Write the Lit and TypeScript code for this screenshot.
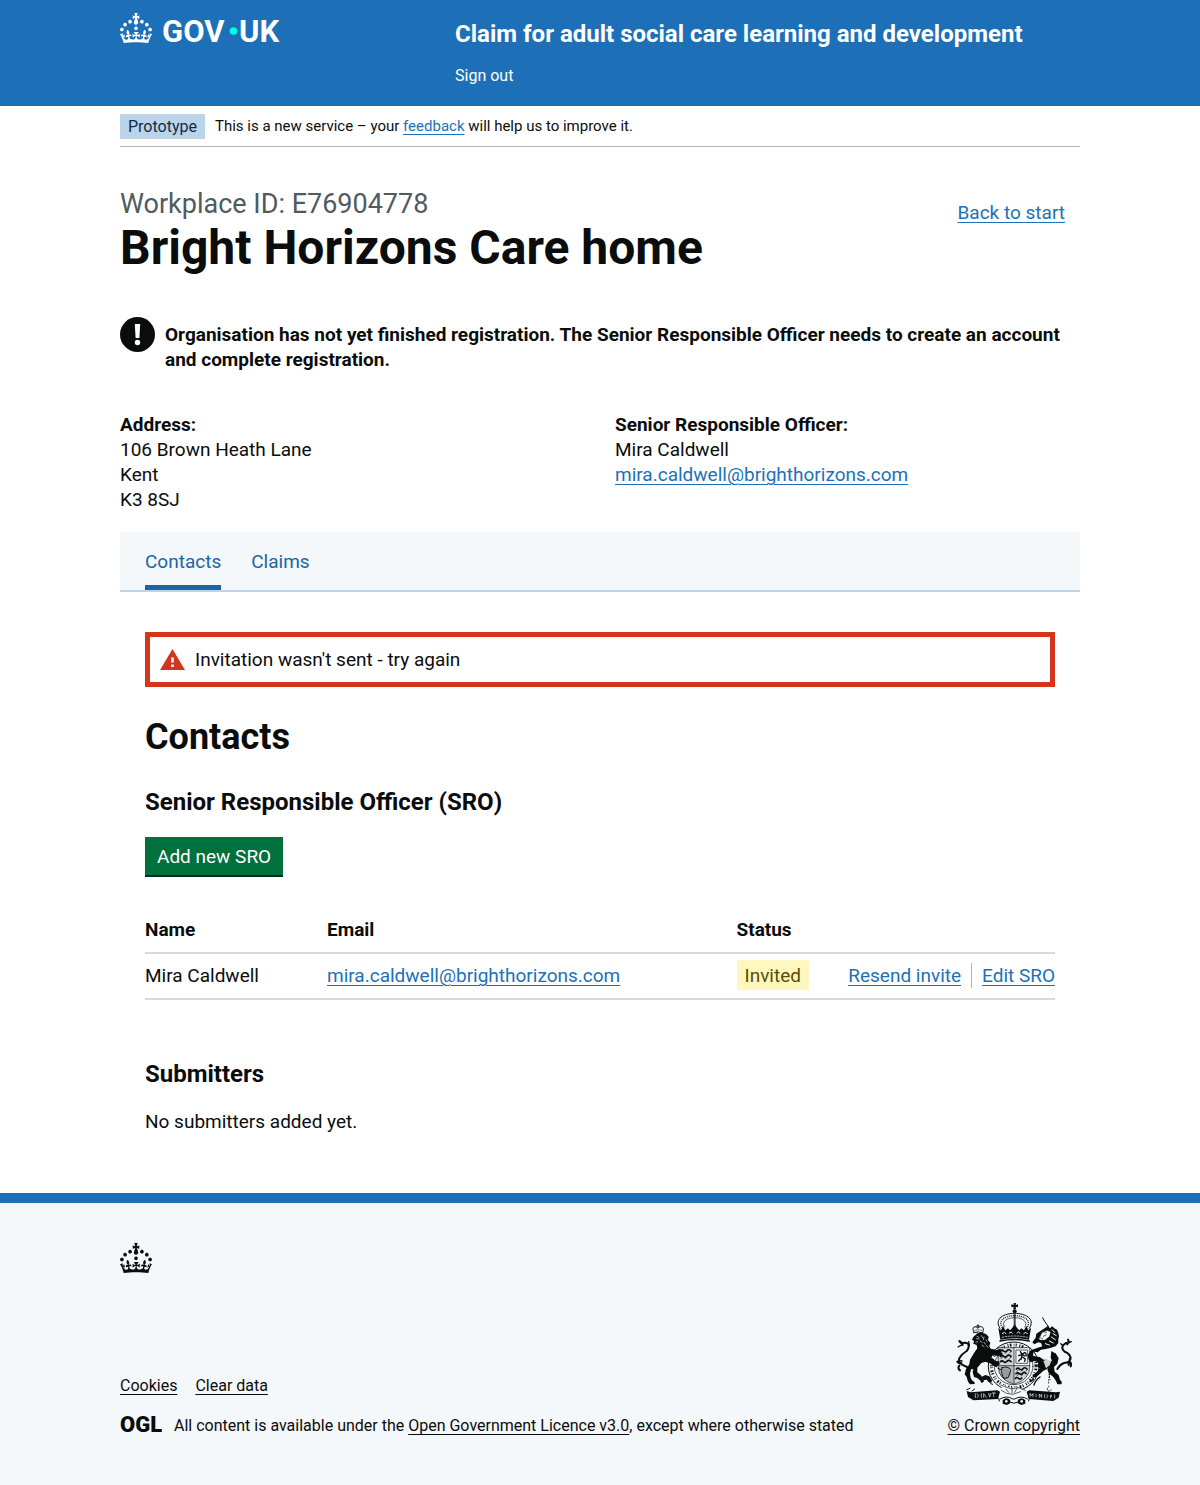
import { LitElement, html, css, svg } from "lit";
import { customElement, property } from "lit/decorators.js";

const CROWN =
  "M22.6 10.4c-1 .4-2-.1-2.4-1-.4-.9.1-2 1-2.4.9-.4 2 .1 2.4 1s-.1 2-1 2.4m-5.9 6.7c-.9.4-2-.1-2.4-1-.4-.9.1-2 1-2.4.9-.4 2 .1 2.4 1s-.1 2-1 2.4m10.8-3.7c-1 .4-2-.1-2.4-1-.4-.9.1-2 1-2.4.9-.4 2 .1 2.4 1s0 2-1 2.4m3.3 4.8c-1 .4-2-.1-2.4-1-.4-.9.1-2 1-2.4.9-.4 2 .1 2.4 1s-.1 2-1 2.4M17 4.7l2.3 1.2V2.5l-2.3.7-.2-.2.9-3h-3.4l.9 3-.2.2c-.1.1-2.3-.7-2.3-.7v3.4L15 4.7c.1.1.1.2.2.2l-1.3 4c-.1.2-.1.4-.1.6 0 1.1.8 2 1.9 2.2h.7c1-.2 1.9-1.1 1.9-2.1 0-.2 0-.4-.1-.6l-1.3-4c-.1-.2 0-.2.1-.3m-7.6 5.7c.9.4 2-.1 2.4-1 .4-.9-.1-2-1-2.4-.9-.4-2 .1-2.4 1s0 2 1 2.4m-5 3c.9.4 2-.1 2.4-1 .4-.9-.1-2-1-2.4-.9-.4-2 .1-2.4 1s.1 2 1 2.4m-3.2 4.8c.9.4 2-.1 2.4-1 .4-.9-.1-2-1-2.4-.9-.4-2 .1-2.4 1s0 2 1 2.4m14.8 11c4.4 0 8.6.3 12.3.8 1.1-4.5 2.4-7 3.7-8.8l-2.5-.9c.2 1.3.3 1.9 0 2.7-.4-.4-.8-1.1-1.1-2.3l-1.2 4c.7-.5 1.3-.8 2-.9-1.1 2.5-2.6 3.1-3.5 3-1.1-.2-1.7-1.2-1.5-2.1.3-1.2 1.5-1.5 2.1-.1 1.1-2.3-.8-3-2-2.3 1.9-1.9 2.1-3.5.6-5.6-2.1 1.6-2.1 3.2-1.2 5.5-1.2-1.4-3.2-.6-2.5 1.6.9-1.4 2.1-.5 1.9.8-.2 1.1-1.7 2.1-3.5 1.9-2.7-.2-2.9-2.1-2.9-3.6.7-.1 1.9.5 2.9 1.9l.4-4.3c-1.1 1.1-2.1 1.4-3.2 1.4.4-1.2 2.1-3 2.1-3h-5.4s1.7 1.9 2.1 3c-1.1 0-2.1-.2-3.2-1.4l.4 4.3c1-1.4 2.2-2 2.9-1.9-.1 1.5-.2 3.4-2.9 3.6-1.9.2-3.4-.8-3.5-1.9-.2-1.3 1-2.2 1.9-.8.7-2.3-1.2-3-2.5-1.6.9-2.2.9-3.9-1.2-5.5-1.5 2-1.3 3.7.6 5.6-1.2-.7-3.1 0-2 2.3.6-1.4 1.8-1.1 2.1.1.2.9-.3 1.9-1.5 2.1-.9.2-2.4-.5-3.5-3 .6 0 1.2.3 2 .9l-1.2-4c-.3 1.1-.7 1.9-1.1 2.3-.3-.8-.2-1.4 0-2.7l-2.9.9C1.3 23 2.6 25.5 3.7 30c3.7-.5 7.9-.8 12.3-.8";

@customElement("gov-crown")
export class GovCrown extends LitElement {
  static styles = css`
    :host { display: block; width: 32px; height: 30px; }
    svg { display: block; fill: currentColor; }
  `;
  render() {
    return html`<svg viewBox="0 0 32 30" width="32" height="30" aria-hidden="true">
      <path fill-rule="evenodd" d=${CROWN}></path>
    </svg>`;
  }
}

@customElement("royal-arms")
export class RoyalArms extends LitElement {
  static styles = css`
    :host { display: block; width: 116px; height: 102px; }
    svg { display: block; }
    .ink { fill: #0b0c0c; }
    .line { fill: none; stroke: #0b0c0c; stroke-linecap: round; stroke-linejoin: round; }
    .band { fill: none; stroke: #0b0c0c; }
    .paper { fill: #f4f8fb; }
    .grey { fill: #b4b8bb; }
    .cut { fill: none; stroke: #f4f8fb; stroke-linecap: round; }
  `;

  private crown() {
    return svg`
      <path class="ink" d="M209 24h7l-1 6 7-2v9l-7-2 1 8h-8l1-8-7 2v-9l7 2z"/>
      <circle class="ink" cx="212" cy="49" r="6"/>
      <path class="paper" d="M169 100C150 70 180 56 212 56s62 14 43 44z"/>
      <path class="line" stroke-width="3" d="M168 100C148 70 182 55 212 55s64 15 44 45"/>
      <path class="band" stroke-width="4" stroke-dasharray="3 3" d="M175 98C160 74 186 62 212 62s52 12 37 36"/>
      <path class="line" stroke-width="2" d="M181 96c-10-16 8-28 31-28s41 12 31 28"/>
      <path class="band" stroke-width="6" stroke-dasharray="4 2" d="M212 58v36"/>
      <path class="ink" d="M163 98l8 8 6-13 7 13 8-6 6 6 6-6 8-12 8 12 6 6 6-6 8 6 7-13 6 13 8-8-6 36q-43-9-86 0z"/>
      <path class="cut" stroke-width="3" d="M175 115q7-7 11 1M196 114q6-7 9 0M219 114q4-7 9 0M239 116q4-8 11-1"/>
      <path class="cut" stroke-width="2" stroke-dasharray="5 4" d="M174 127q38-8 76 0"/>
      <path class="line" stroke-width="4" d="M168 138q44-9 88 0"/>`;
  }

  private garter() {
    return svg`
      <ellipse class="paper" cx="209" cy="214" rx="76" ry="73"/>
      <ellipse class="line" stroke-width="3" cx="209" cy="214" rx="76" ry="73"/>
      <ellipse class="band" stroke-width="9" stroke-dasharray="3 4 5 7 2 4 3 8" cx="209" cy="214" rx="67" ry="64"/>
      <ellipse class="line" stroke-width="2" cx="209" cy="214" rx="58" ry="55"/>`;
  }

  private shield() {
    return svg`
      <path class="paper" d="M163 158h94v58q0 38-47 52-47-14-47-52z"/>
      <path class="grey" d="M163 158h47v54h-47zM210 212h47v4q0 38-47 52z" opacity=".55"/>
      <path class="grey" d="M163 212h47v56q-47-14-47-52z"/>
      <path class="line" stroke-width="2" d="M163 158h94v58q0 38-47 52-47-14-47-52zM210 158v110M163 212h94"/>
      <path class="line" stroke-width="5" d="M169 168q5-5 10 0t10-1 12 1M169 184q5-5 10 0t10-1 12 1M169 200q5-5 10 0t10-1 12 1"/>
      <path class="line" stroke-width="2" d="M171 175l4-5M184 175l4-5M197 174l4-4M171 191l4-5M184 191l4-5M197 190l4-4"/>
      <rect class="line" stroke-width="2" x="217" y="165" width="34" height="40"/>
      <path class="line" stroke-width="4" d="M229 170l5 8 8-5M224 182l10-4 9 5M231 190l-7 8M236 186l8 6-2 7M245 174l2 8M234 178l-2 14"/>
      <path class="line" stroke-width="3" d="M174 218q18-6 26 6-2 14-8 24l-12 2q-10-12-6-32"/>
      <path class="line" stroke-width="1" d="M180 222v24M186 222v26M192 222v22"/>
      <path class="line" stroke-width="5" d="M217 222q5-5 10 0t10-1 12 1M216 236q5-5 10 0t10-1 10 1M214 250q5-5 9 0t10-1"/>
      <path class="line" stroke-width="2" d="M219 229l4-5M232 229l4-5M246 228l3-4M219 243l4-5M232 243l4-5"/>`;
  }

  private lion() {
    return svg`
      <path class="ink" d="M92 122l8-7 14-2 12 4 8 8-2 10 7 8-3 10 4 8 20 4 8-4 6 6-4 6 6 2-2 6-12 2-16-2-4 8 12 8 10 2 4 8-6 4-4 6-8-3-12-9-14-5-12 4-12 14 0 14 10 8 8 12 2 8-8 4-4-8-10-8-8-2-4-14 2-10-6-2-4 16 2 12 4 8 8 6 0 5-14 1-6-8-4-14-6-8 4-16 10-14 2-14 12-20 10-14-2-10-10-4 2-8-6-4 4-8z"/>
      <path class="ink" d="M112 246l12-6 12 4 8 12-2 8-8-2-6-8-10 2z"/>
      <path class="line" stroke-width="3" d="M90 112q-8-14 3-17 6 1 9 5 4-7 11-5 9 4 3 17M89 113q13-5 28 1M102 89v9M98 93h8"/>
      <path class="line" stroke-width="2" stroke-dasharray="2 3" d="M92 107q10-5 22 0"/>
      <path class="cut" stroke-width="2" d="M99 124l6 3M97 131l8 1M112 122l4 6M120 126l-2 8M108 138l6 4M120 142l4 5M126 134l3 5M128 152l4 5M114 150l6 5M101 140l-5 2"/>
      <path class="line" stroke-width="6" d="M84 220q-14-2-24-8-18-8-14-22 8-14 22-22 10-12 4-22-10-6-18 0M52 204q-8 2-12-4M56 150q-4-10-10-12M46 212q-6 8 2 14"/>
      <path class="line" stroke-width="4" d="M46 140l8 8M42 156l14-8M74 140l2 12M44 196l10 2"/>
      <path class="line" stroke-width="3" d="M92 282l-8 6M78 280l-10 4M140 266l6 2M168 180l6 3M162 220l8 4"/>`;
  }

  private unicorn() {
    return svg`
      <path class="line" stroke-width="3" d="M296 68l4 8M301 77l5 8M307 86l6 9"/>
      <path class="ink" d="M313 92l4 8 8-6 6 6 8 4 4 10 2 10-2 8 0 12-8 10-14 4-16 4-14 2-10 8-10-2-6 6 4 8 18 2 12 8 12 0 14 4 0 10-16 14-12 6-6 6-14 12-10 2-2-6 14-12 8-10-8-6 4-10-10-6-14 4-6-10-2-12 10-14 16-6 18-6-4-10-8-2-12 6-6-6 10-14 2-12z"/>
      <path class="paper" d="M294 112l16-6 10 4-4 14-12 10-12 2-8-4z"/>
      <path class="line" stroke-width="2" d="M284 132l10-20 16-6 10 4M298 124l8-4M303 113l4 0M290 128l6 4"/>
      <path class="cut" stroke-width="3" d="M324 104l8 8M327 116l10 6M322 126l12 8M316 138l12 6M304 146l12 4"/>
      <path class="ink" d="M322 168l14 8 8 14-4 16-10 10 2 14 12 10 4 14 6 8-2 6-12 0-4-10-8-12-12-10-6-12 6-14 10-8-6-14z"/>
      <path class="paper" d="M298 198l14-6 10 4-4 14-12 10z" opacity=".85"/>
      <path class="band" stroke-width="3" stroke-dasharray="5 3" d="M334 176q-4 20-16 34-6 22 0 44M326 214q-12 24-12 52M316 274q-10 4-4 14 10 2 10-8"/>
      <path class="line" stroke-width="6" d="M340 222q8-14 20-18 20-2 20-16-4-14-18-18-12-10-4-20 8-8 18-8M370 148q6-10 2-14M378 190l-4 20M376 200q8 6 4 14"/>
      <path class="line" stroke-width="4" d="M358 152l-8-6M366 144l16-4M372 204l8-2M262 186l-4 10M268 254l-10 6M288 246q-14 10-18 24"/>`;
  }

  private motto() {
    return svg`
      <path class="ink" d="M68 288l12 4 80-6 8 4-6 22-74 4-16-10z"/>
      <path class="ink" d="M348 290l-12 2-80-6-8 4 6 22 74 6 16-10z"/>
      <path class="cut" stroke-width="2" d="M94 296v12M100 296q8 6 0 12M112 296v11M119 307v-11l8 11M134 295l3 11 4-11M149 294v11M145 294h9"/>
      <path class="cut" stroke-width="2" d="M258 304v-9l5 7 4-6v9M275 297q7 4 0 9M286 307v-10l7 10v-9M302 299v9M308 300q8 4 0 9M320 309v-9q8 3 1 5M332 300v9"/>
      <path class="paper" d="M172 268l30 10 18-2 22 8-6 18-36 4-26-14z"/>
      <path class="line" stroke-width="2" d="M170 270l32 12 20-4 22 8M172 286q14 12 34 12l24-8M186 282l8 10M204 276v18M220 278l-8 14"/>
      <path class="line" stroke-width="3" d="M168 312q20-12 38 0h6q20-12 38 0"/>
      <path class="ink" d="M176 316q10-12 22-2l2 10-12 6-12-4zM222 314q12-10 22 2l0 10-12 4-12-6z"/>
      <circle class="paper" cx="187" cy="319" r="4"/><circle class="paper" cx="233" cy="319" r="4"/>
      <path class="line" stroke-width="3" d="M200 322q10 6 20 0M166 318l-2-8M254 318l2-8"/>`;
  }

  render() {
    return html`<svg viewBox="36 24 348 306" width="116" height="102" aria-hidden="true">
      ${this.garter()}${this.shield()}${this.crown()}${this.lion()}${this.unicorn()}${this.motto()}
    </svg>`;
  }
}

interface Contact {
  name: string;
  email: string;
  status: string;
}

@customElement("app-root")
export class AppRoot extends LitElement {
  @property({ type: Array }) contacts: Contact[] = [
    { name: "Mira Caldwell", email: "mira.caldwell@brighthorizons.com", status: "Invited" },
  ];

  static styles = css`
    :host {
      display: block;
      background: #f4f8fb;
      color: #0b0c0c;
      font-family: Roboto, "Liberation Sans", sans-serif;
      font-size: 19px;
      line-height: 25px;
    }
    * { box-sizing: border-box; }
    h1, h2, h3, p, ul, address { margin: 0; padding: 0; font-style: normal; }
    a { color: #1d70b8; text-decoration-thickness: 1px; text-underline-offset: 3px; }
    .width { max-width: 960px; margin: 0 auto; }

    .header { background: #1d70b8; color: #fff; }
    .header .width { display: grid; grid-template-columns: 335px 1fr; padding: 13px 0 20px; }
    .logo { display: flex; gap: 10px; align-items: flex-start; color: #fff; text-decoration: none; }
    .header a { color: #fff; text-decoration: none; }
    .wordmark { fill: #fff; font-family: Roboto, sans-serif; font-weight: 700; font-size: 31px; }
    .dot { fill: #00ffe0; }
    .service { font-size: 24px; line-height: 30px; font-weight: 700; padding-top: 6px; }
    .signout { font-size: 16px; line-height: 20px; padding-top: 17px; }
    .signout a { display: block; }

    .page { background: #fff; padding-bottom: 59px; }
    .phase { display: flex; align-items: center; gap: 10px; padding: 8px 0 7px; border-bottom: 1px solid #b1b4b6; font-size: 15px; }
    .tag { background: #bbd4ea; color: #0c2d4a; padding: 0 8px; font-size: 16px; font-weight: 400; }

    .title { display: flex; justify-content: space-between; padding: 40px 15px 0 0; }
    .caption { display: block; font-size: 27px; line-height: 34px; color: #505a5f; font-weight: 400; }
    h1 { font-size: 48px; line-height: 54px; font-weight: 700; }
    .back { padding-top: 13px; }
    .warning { display: flex; gap: 10px; font-weight: 700; padding-top: 42px; }
    .warning svg { flex: none; }
    .warning p { padding-top: 5px; }
    .details { display: grid; grid-template-columns: 1fr 1fr; column-gap: 30px; padding: 40px 0 20px; }

    .tabs { display: flex; gap: 30px; padding: 0 25px; background: #f4f8fb; border-bottom: 2px solid #bbd4ea; }
    .tabs a { color: #1a65a6; padding: 17px 0 11px; text-decoration: none; border-bottom: 5px solid transparent; }
    .tabs a[aria-current] { border-bottom-color: #1a65a6; }

    .panel { padding: 40px 25px 0; }
    .alert { display: flex; align-items: center; gap: 10px; border: 5px solid #d4351c; padding: 10px; }
    h2 { font-size: 36px; line-height: 40px; padding: 30px 0; }
    h3 { font-size: 24px; line-height: 30px; }
    button {
      font: inherit; color: #fff; background: #00703c; border: 0; border-bottom: 2px solid #002d18;
      padding: 7px 12px 6px; margin: 20px 0 30px; cursor: pointer;
    }
    table { width: 100%; border-collapse: collapse; }
    th, td { text-align: left; padding: 10px 20px 10px 0; border-bottom: 2px solid #d8dada; line-height: 25px; }
    td { padding-top: 9px; }
    .name { width: 20%; }
    .email { width: 45%; }
    .actions { padding-right: 0; }
    .links { display: flex; justify-content: flex-end; white-space: nowrap; }
    .links a + a { border-left: 1px solid #b1b4b6; margin-left: 10px; padding-left: 10px; }
    .status { display: inline-block; background: #fff7bf; color: #594d00; padding: 3px 8px 2px; margin: -3px 0 -2px; }
    .submitters { padding-top: 59px; }
    .submitters p { padding-top: 20px; }

    .footer { border-top: 10px solid #1d70b8; padding: 40px 0 49px; font-size: 16px; line-height: 20px; }
    .footer a { color: #0b0c0c; }
    .meta { display: flex; justify-content: space-between; align-items: flex-end; padding-top: 30px; }
    .metalinks { display: flex; gap: 18px; list-style: none; padding-bottom: 20px; }
    .licence { display: flex; gap: 12px; }
    .ogl { flex: none; margin: -5px 0 -3px; fill: #0b0c0c; font-family: Roboto, sans-serif; font-weight: 900; font-size: 22px; }
    .crest { display: flex; flex-direction: column; align-items: center; gap: 11px; }
  `;

  render() {
    return html`
      <header class="header">
        <div class="width">
          <a class="logo" href="#" aria-label="GOV.UK">
            <gov-crown></gov-crown>
            <svg class="wordmark" width="126" height="42" viewBox="0 0 126 42" aria-hidden="true">
              <text x="0" y="29">GOV</text>
              <circle class="dot" cx="71.500" cy="18" r="3.800"></circle>
              <text x="77" y="29">UK</text>
            </svg>
          </a>
          <div>
            <div class="service"><a href="#">Claim for adult social care learning and development</a></div>
            <nav class="signout"><a href="#">Sign out</a></nav>
          </div>
        </div>
      </header>

      <div class="page">
        <div class="width">
          <div class="phase">
            <strong class="tag">Prototype</strong>
            <span>This is a new service – your <a href="#">feedback</a> will help us to improve it.</span>
          </div>
          <main>
            <div class="title">
              <div>
                <span class="caption">Workplace ID: E76904778</span>
                <h1>Bright Horizons Care home</h1>
              </div>
              <a class="back" href="#">Back to start</a>
            </div>
            <div class="warning">
              <svg width="35" height="35" viewBox="0 0 35 35" aria-hidden="true">
                <circle cx="17.500" cy="17.500" r="17.500" fill="#0b0c0c"></circle>
                <path d="M14.800 7h5.400l-.8 14h-3.800z" fill="#fff"></path>
                <circle cx="17.500" cy="25.500" r="2.700" fill="#fff"></circle>
              </svg>
              <p>Organisation has not yet finished registration. The Senior Responsible Officer needs to create an account and complete registration.</p>
            </div>
            <div class="details">
              <address><b>Address:</b><br />106 Brown Heath Lane<br />Kent<br />K3 8SJ</address>
              <div><b>Senior Responsible Officer:</b><br />Mira Caldwell<br /><a href="#">mira.caldwell@brighthorizons.com</a></div>
            </div>
            <nav class="tabs" aria-label="Organisation">
              <a href="#" aria-current="page">Contacts</a>
              <a href="#">Claims</a>
            </nav>
            <div class="panel">
              <div class="alert" role="alert">
                <svg width="25" height="21" viewBox="0 0 25 21" aria-hidden="true">
                  <path d="M12.500 0L25 21H0z" fill="#d4351c"></path>
                  <path d="M11.200 8.500h2.600v5h-2.600zM11.200 15.500h2.600v2.500h-2.600z" fill="#fff"></path>
                </svg>
                <span>Invitation wasn't sent - try again</span>
              </div>
              <h2>Contacts</h2>
              <h3>Senior Responsible Officer (SRO)</h3>
              <button type="button">Add new SRO</button>
              <table>
                <thead>
                  <tr>
                    <th class="name" scope="col">Name</th>
                    <th class="email" scope="col">Email</th>
                    <th scope="col">Status</th>
                    <th class="actions"></th>
                  </tr>
                </thead>
                <tbody>
                  ${this.contacts.map(
                    (c) => html`<tr>
                      <td>${c.name}</td>
                      <td><a href="#">${c.email}</a></td>
                      <td><span class="status">${c.status}</span></td>
                      <td class="actions"><div class="links"><a href="#">Resend invite</a><a href="#">Edit SRO</a></div></td>
                    </tr>`
                  )}
                </tbody>
              </table>
              <section class="submitters">
                <h3>Submitters</h3>
                <p>No submitters added yet.</p>
              </section>
            </div>
          </main>
        </div>
      </div>

      <footer class="footer">
        <div class="width">
          <gov-crown></gov-crown>
          <div class="meta">
            <div>
              <ul class="metalinks">
                <li><a href="#">Cookies</a></li>
                <li><a href="#">Clear data</a></li>
              </ul>
              <div class="licence">
                <svg class="ogl" width="42" height="28" viewBox="0 0 42 28" aria-hidden="true">
                  <text x="0" y="21">OGL</text>
                </svg>
                <span>All content is available under the <a href="#">Open Government Licence v3.0</a>, except where otherwise stated</span>
              </div>
            </div>
            <div class="crest">
              <royal-arms></royal-arms>
              <a href="#">© Crown copyright</a>
            </div>
          </div>
        </div>
      </footer>
    `;
  }
}
